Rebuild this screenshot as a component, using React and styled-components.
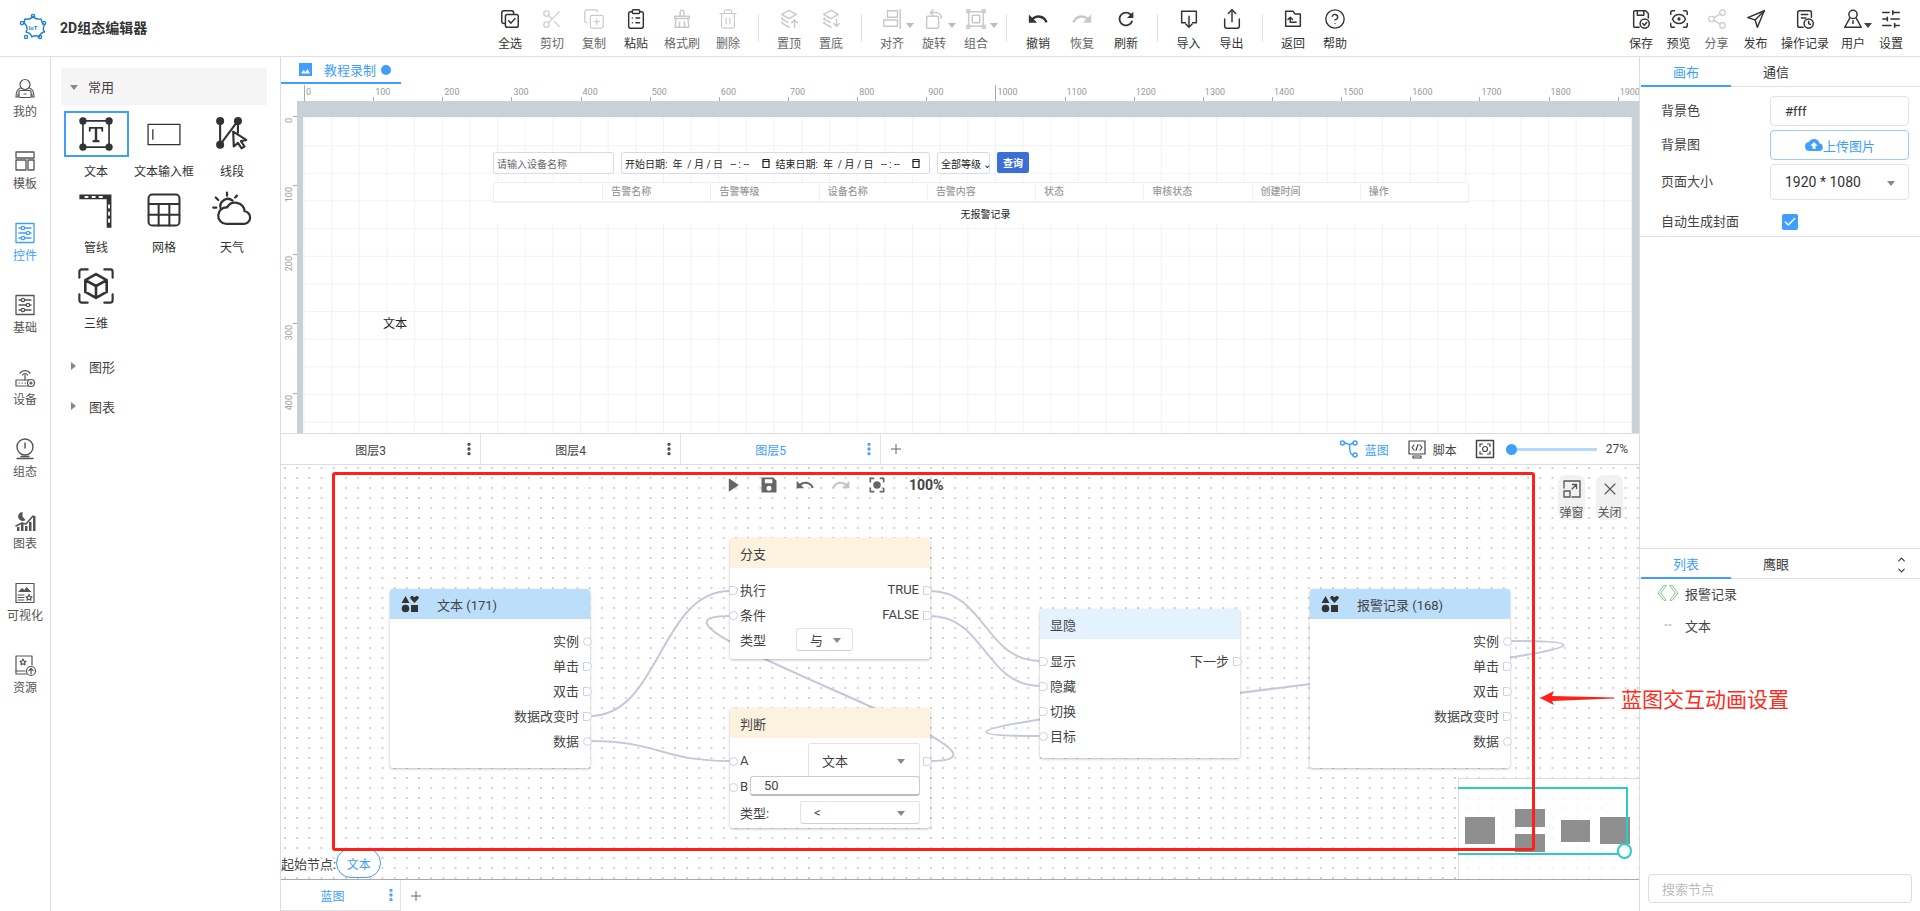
import React from 'react';
import styled, { createGlobalStyle } from 'styled-components';
import {
  Scissors, CopyPlus, ClipboardList, Trash2, CircleHelp, Share, Share2, ScanEye,
  SlidersHorizontal, EllipsisVertical, Plus, X, ChevronUp, ChevronDown,
} from 'lucide-react';

const BLUE = '#409eff';
const LINK = '#c3c8da';

const Global = createGlobalStyle`
  html, body { margin: 0; padding: 0; background: #fff; }
  body {
    font-family: Roboto, "Noto Sans CJK SC", sans-serif;
    font-size: 12px;
    color: #333;
    overflow: hidden;
  }
  * { box-sizing: border-box; }
`;

// page frame
const Page = styled.div`
  position: relative;
  width: 1920px;
  height: 911px;
  display: flex;
  flex-direction: column;
  overflow: hidden;
`;

const Header = styled.header`
  height: 57px;
  flex: none;
  display: flex;
  border-bottom: 1px solid #e0e0e0;
`;

const Brand = styled.div`
  width: 489px;
  flex: none;
  display: flex;
  align-items: center;
  padding-left: 19px;
  gap: 13px;
  font-size: 14px;
  font-weight: 700;
  color: #333;
  padding-bottom: 2px;
`;

const ToolGroup = styled.div`
  display: flex;
  align-items: flex-start;
  margin-left: ${p => (p.$right ? 'auto' : '0')};
  padding-right: ${p => (p.$right ? '9px' : '0')};
`;

const Tool = styled.div`
  position: relative;
  width: ${p => p.$w || 42}px;
  flex: none;
  padding-top: 7px;
  display: flex;
  flex-direction: column;
  align-items: center;
  color: ${p => (p.$off ? '#c9c9c9' : '#333')};
  &::after {
    content: ${p => (p.$caret ? '""' : 'none')};
    position: absolute;
    right: -1px;
    top: 23px;
    border: 4px solid transparent;
    border-top: 5px solid ${p => (p.$dark ? '#444' : '#bbb')};
    border-bottom: 0;
  }
`;

const ToolIcon = styled.div`
  height: 24px;
  display: flex;
  align-items: center;
  justify-content: center;
`;

const ToolLabel = styled.span`
  margin-top: 6px;
  line-height: 14px;
  white-space: nowrap;
  color: ${p => (p.$off ? '#666' : '#333')};
`;

const ToolSep = styled.div`
  width: 1px;
  height: 28px;
  margin: 14px 9px 0;
  flex: none;
  background: #e0e0e0;
`;

const Glyph = styled.svg.attrs(p => ({ viewBox: p.viewBox || '0 0 24 24' }))`
  width: ${p => p.$s || 22}px;
  height: ${p => p.$s || 22}px;
  flex: none;
  fill: none;
  stroke: currentColor;
  stroke-width: ${p => p.$sw || 1.6};
  stroke-linecap: round;
  stroke-linejoin: round;
  display: block;
`;

const Solid = styled.path`
  fill: currentColor;
  stroke: none;
`;

const Body = styled.div`
  flex: 1;
  min-height: 0;
  display: flex;
`;

// left rail
const Rail = styled.nav`
  width: 51px;
  flex: none;
  padding-top: 20px;
  border-right: 1px solid #ddd;
`;

const RailItem = styled.div`
  height: 72px;
  display: flex;
  flex-direction: column;
  align-items: center;
  color: ${p => (p.$active ? BLUE : '#555')};
  span { margin-top: 4px; line-height: 14px; white-space: nowrap; }
`;

const RailIcon = styled.div`
  height: 24px;
  display: flex;
  align-items: center;
`;

// components panel
const Palette = styled.aside`
  width: 230px;
  flex: none;
  padding: 11px 13px 0 10px;
  border-right: 1px solid #ddd;
`;

const GroupHead = styled.div`
  height: ${p => (p.$open ? 37 : 40)}px;
  display: flex;
  align-items: center;
  gap: 10px;
  padding-left: ${p => (p.$open ? 9 : 10)}px;
  font-size: 13px;
  background: ${p => (p.$open ? '#f5f5f5' : 'transparent')};
  color: #444;
`;

const Caret = styled.i`
  width: 0;
  height: 0;
  border-style: solid;
  ${p => (p.$down
    ? 'border-width: 5px 4px 0; border-color: #888 transparent transparent; margin-top:2px;'
    : 'border-width: 4px 0 4px 5px; border-color: transparent transparent transparent #888; margin-right:3px;')}
`;

const PaletteGrid = styled.div`
  display: grid;
  grid-template-columns: repeat(3, 68px);
  grid-auto-rows: 76px;
  margin: 6px 0 7px 1px;
`;

const Cell = styled.div`
  display: flex;
  flex-direction: column;
  align-items: center;
  color: #333;
  span { margin-top: 8px; line-height: 14px; white-space: nowrap; }
`;

const CellIcon = styled.div`
  width: 65px;
  height: 46px;
  display: flex;
  align-items: center;
  justify-content: center;
  border: 2px solid ${p => (p.$sel ? BLUE : 'transparent')};
`;

// center column
const Center = styled.main`
  flex: 1;
  min-width: 0;
  display: flex;
  flex-direction: column;
  border-right: 1px solid #ddd;
`;

const DocTabs = styled.div`
  height: 27px;
  flex: none;
  display: flex;
`;

const DocTab = styled.div`
  width: 120px;
  display: flex;
  align-items: center;
  padding-left: 18px;
  gap: 12px;
  font-size: 13px;
  color: ${BLUE};
  border-bottom: 2px solid ${BLUE};
`;

const DocDot = styled.i`
  width: 10px;
  height: 10px;
  border-radius: 50%;
  margin-left: -7px;
  background: ${BLUE};
`;

const TopRuler = styled.div`
  height: 17px;
  flex: none;
  display: flex;
  padding-left: 23px;
  overflow: hidden;
`;

const TopTick = styled.div`
  position: relative;
  width: 69.15px;
  flex: none;
  padding-left: 2px;
  font-size: 9px;
  line-height: 17px;
  color: #999;
  &::before {
    content: "";
    position: absolute;
    left: 0;
    bottom: 0;
    width: 1px;
    height: ${p => (p.$major ? 16 : 4)}px;
    background: #aaa;
  }
`;

const StageRow = styled.div`
  height: 333px;
  flex: none;
  display: flex;
  border-bottom: 1px solid #ddd;
  overflow: hidden;
`;

const LeftRuler = styled.div`
  width: 16px;
  flex: none;
  padding-top: 15px;
`;

const LeftTick = styled.div`
  position: relative;
  height: 69.15px;
  font-size: 9px;
  line-height: 14px;
  color: #999;
  padding-top: 2px;
  &::before {
    content: "";
    position: absolute;
    right: 0;
    top: 0;
    width: 4px;
    height: 1px;
    background: #aaa;
  }
  span {
    display: block;
    writing-mode: vertical-rl;
    transform: rotate(180deg);
    margin-left: 1px;
  }
`;

const StageWrap = styled.div`
  flex: 1;
  min-width: 0;
  padding: 16px 7px 0 6px;
  background: #c9d1d7;
`;

const Canvas = styled.div`
  position: relative;
  height: 100%;
  background-color: #fff;
  background-image:
    linear-gradient(to right, #f0f2f4 1px, transparent 1px),
    linear-gradient(to bottom, #f0f2f4 1px, transparent 1px);
  background-size: 27.66px 27.66px;
  background-position: 0.5px 0.5px;
`;

const FilterBar = styled.div`
  position: absolute;
  left: 190px;
  top: 35px;
  display: flex;
  align-items: flex-start;
  gap: 7px;
  font-size: 10px;
  color: #222;
`;

const FakeInput = styled.div`
  width: ${p => p.$w}px;
  height: 22px;
  flex: none;
  display: flex;
  align-items: center;
  padding: 0 3px;
  background: #fff;
  border: 1px solid #d5dbee;
  border-radius: 3px;
  color: ${p => (p.$ph ? '#666' : '#222')};
  white-space: pre;
`;

const DateGroup = styled.div`
  flex: 1;
  display: flex;
  align-items: center;
  padding-right: 5px;
  justify-content: space-between;
`;

const QueryBtn = styled.div`
  width: 32px;
  height: 21px;
  flex: none;
  display: flex;
  align-items: center;
  justify-content: center;
  background: #3b6fd6;
  color: #fff;
  font-weight: 700;
  border-radius: 2px;
`;

const AlarmTable = styled.div`
  position: absolute;
  left: 190px;
  top: 65px;
  width: 976px;
  height: 42px;
  background: #fff;
  font-size: 10px;
  border-radius: 4px 4px 0 0;
`;

const AlarmHead = styled.div`
  display: grid;
  grid-template-columns: repeat(9, 1fr);
  height: 21px;
  border: 1px solid #f0f0f3;
  border-radius: 4px 4px 0 0;
  border-bottom-width: 2px;
`;

const AlarmTh = styled.div`
  padding-left: 8px;
  line-height: 18px;
  color: #999;
  font-weight: 500;
  border-left: ${p => (p.$first ? '0' : '1px solid #f0f0f3')};
`;

const AlarmEmpty = styled.div`
  height: 21px;
  display: flex;
  align-items: center;
  justify-content: center;
  padding-left: 9px;
  color: #222;
`;

const CanvasText = styled.div`
  position: absolute;
  left: 80px;
  top: 198px;
  line-height: 18px;
  color: #222;
`;

// layer bar
const LayerBar = styled.div`
  height: 31px;
  flex: none;
  display: flex;
  align-items: center;
  border-bottom: 1px solid #ddd;
`;

const LayerTab = styled.div`
  position: relative;
  width: 200px;
  height: 100%;
  flex: none;
  display: flex;
  align-items: center;
  justify-content: center;
  padding-right: 20px;
  border-right: 1px solid #e4e4e4;
  color: ${p => (p.$active ? BLUE : '#444')};
  svg { position: absolute; right: 3px; top: 7px; }
`;

const AddBtn = styled.div`
  display: flex;
  margin-left: 7px;
  color: #666;
`;

const LayerTools = styled.div`
  margin-left: auto;
  display: flex;
  align-items: center;
  padding-right: 11px;
  color: #444;
  white-space: nowrap;
`;

const LayerTool = styled.div`
  display: flex;
  align-items: center;
  gap: 6px;
  margin-right: 18px;
  color: ${p => (p.$active ? BLUE : '#444')};
`;

const Slider = styled.div`
  position: relative;
  width: 86px;
  height: 3px;
  margin: 0 9px 0 -2px;
  background: #b3d8ff;
  &::before {
    content: "";
    position: absolute;
    left: -5px;
    top: -4px;
    width: 11px;
    height: 11px;
    border-radius: 50%;
    background: ${BLUE};
  }
`;

// blueprint
const Blueprint = styled.section`
  position: relative;
  height: 415px;
  flex: none;
  border-bottom: 1px solid #aaa;
  background-color: #fff;
  background-image: radial-gradient(circle at 1px 1px, #cfcfcf 0.7px, transparent 1px);
  background-size: 12.2px 10px;
  background-position: 3px 2px;
  font-size: 13px;
`;

const Links = styled.svg`
  position: absolute;
  left: 0;
  top: 0;
  overflow: visible;
  fill: none;
  stroke: ${LINK};
  stroke-width: 2;
`;

const FlowTools = styled.div`
  position: absolute;
  left: 442px;
  top: 10px;
  height: 20px;
  display: flex;
  align-items: center;
  gap: 16px;
  color: #666;
  z-index: 3;
`;

const Zoom = styled.span`
  margin-left: 6px;
  font-size: 14px;
  font-weight: 700;
  color: #444;
`;

const Node = styled.div`
  position: absolute;
  left: ${p => p.$x}px;
  top: ${p => p.$y}px;
  width: 200px;
  height: ${p => p.$h}px;
  background: #fff;
  border-radius: 3px;
  box-shadow: 0 1px 3px rgba(0, 0, 0, 0.28);
  z-index: 2;
`;

const NodeHead = styled.div`
  height: 30px;
  display: flex;
  align-items: center;
  padding-left: 10px;
  gap: ${p => (p.$icon ? 17 : 0)}px;
  background: ${p => p.$bg};
  border-radius: 3px 3px 0 0;
  color: #444;
`;

const NodeBody = styled.div`
  padding-top: ${p => (p.$tight ? 0 : 9)}px;
`;

const Row = styled.div`
  position: relative;
  height: ${p => p.$h || 25}px;
  margin-top: ${p => p.$mt || 0}px;
  display: flex;
  align-items: center;
  justify-content: ${p => (p.$out ? 'flex-end' : 'space-between')};
  padding: 0 ${p => p.$pr ?? 11}px 0 10px;
  color: #444;
  white-space: nowrap;
`;

const Port = styled.i`
  position: absolute;
  top: 50%;
  width: 9px;
  height: 9px;
  margin-top: -3.5px;
  background: #fff;
  border: 1.5px solid #ccd1e2;
  border-radius: ${p => (p.$exec ? '0 50% 50% 0' : '50%')};
  ${p => (p.$out ? 'right: -2px;' : 'left: -1px;')}
`;

const PickBox = styled.div`
  width: ${p => p.$w}px;
  height: ${p => p.$h}px;
  flex: none;
  display: flex;
  align-items: center;
  justify-content: space-between;
  padding: 0 ${p => p.$pr || 13}px 0 ${p => p.$pl || 13}px;
  background: #fff;
  border: 1px solid #e3e3e3;
  border-bottom-color: #d0d0d0;
  border-radius: 3px;
  position: relative;
  z-index: ${p => p.$z || 0};
`;

const NumBox = styled(PickBox)`
  border: 1px solid #ccc;
  border-bottom: 2px solid #bbb;
  justify-content: flex-start;
`;

const PopBtns = styled.div`
  position: absolute;
  right: 16px;
  top: 10px;
  display: flex;
  gap: 11px;
  z-index: 3;
`;

const PopBtn = styled.div`
  width: 27px;
  height: 45px;
  display: flex;
  flex-direction: column;
  align-items: center;
  padding-top: 4px;
  background: #f1f1f1;
  border-radius: 8px;
  color: #555;
  font-size: 12px;
  span { margin-top: 7px; line-height: 14px; white-space: nowrap; }
`;

const StartRow = styled.div`
  position: absolute;
  left: 0;
  top: 383px;
  height: 30px;
  display: flex;
  align-items: center;
  color: #444;
  z-index: 3;
`;

const StartPill = styled.div`
  width: 45px;
  height: 30px;
  display: flex;
  align-items: center;
  justify-content: center;
  background: #fff;
  border: 1px solid ${BLUE};
  border-radius: 15px;
  color: ${BLUE};
  font-size: 12px;
`;

const RedFrame = styled.div`
  position: absolute;
  left: 51px;
  top: 7px;
  width: 1203px;
  height: 379px;
  border: 3px solid #ff2119;
  border-radius: 3px;
  z-index: 5;
  pointer-events: none;
`;

const Minimap = styled.div`
  position: absolute;
  right: 0;
  bottom: 0;
  width: 181px;
  height: 101px;
  background: rgba(255, 255, 255, 0.7);
  border-left: 1px solid #ddd;
  border-top: 1px solid #ddd;
  z-index: 4;
`;

const MiniBlock = styled.i`
  position: absolute;
  left: ${p => p.$x}px;
  top: ${p => p.$y}px;
  width: ${p => p.$w}px;
  height: ${p => p.$h}px;
  background: #8f8f8f;
`;

const MiniView = styled.div`
  position: absolute;
  left: -1px;
  top: 8px;
  width: 170px;
  height: 68px;
  border: 2px solid #2dcbc0;
  border-left: 0;
  &::after {
    content: "";
    position: absolute;
    right: -6px;
    bottom: -6px;
    width: 11px;
    height: 12px;
    border-radius: 50%;
    background: #fff;
    border: 2px solid #2dcbc0;
  }
`;

const BottomTabs = styled.div`
  flex: 1;
  display: flex;
  align-items: center;
`;

const BottomTab = styled(LayerTab)`
  width: 120px;
  padding-right: 16px;
  color: ${BLUE};
  border-bottom: 1px solid #e4e4e4;
  svg { top: 7px; right: 1px; }
`;

// right panel
const Side = styled.aside`
  width: 280px;
  flex: none;
  display: flex;
  flex-direction: column;
  font-size: 13px;
`;

const SideTabs = styled.div`
  height: ${p => (p.$top ? 31 : 30)}px;
  flex: none;
  display: flex;
  align-items: stretch;
  padding-left: 1px;
  border-top: ${p => (p.$top ? '1px solid #e0e0e0' : '0')};
  border-bottom: 1px solid #e0e0e0;
  position: relative;
`;

const SideTab = styled.div`
  width: 90px;
  display: flex;
  align-items: center;
  justify-content: center;
  margin-bottom: -1px;
  color: ${p => (p.$active ? BLUE : '#333')};
  border-bottom: 2px solid ${p => (p.$active ? BLUE : 'transparent')};
`;

const Form = styled.div`
  height: 150px;
  flex: none;
  padding: 9px 11px 0 21px;
  border-bottom: 1px solid #e0e0e0;
  display: flex;
  flex-direction: column;
  gap: 4px;
`;

const FormRow = styled.div`
  display: flex;
  align-items: center;
  justify-content: space-between;
  color: #444;
`;

const FormLabel = styled.span`
  margin-bottom: 3px;
`;

const FieldBox = styled.div`
  width: 139px;
  height: ${p => p.$h || 30}px;
  display: flex;
  align-items: center;
  justify-content: ${p => (p.$center ? 'center' : 'space-between')};
  padding: 0 13px 0 14px;
  border: 1px solid ${p => (p.$blue ? '#9ccbfb' : '#e2e2e2')};
  border-radius: 4px;
  color: ${p => (p.$blue ? BLUE : '#333')};
  font-size: ${p => p.$fs || 13}px;
`;

const Check = styled.div`
  width: 16px;
  height: 16px;
  margin-right: 111px;
  display: flex;
  align-items: center;
  justify-content: center;
  background: ${BLUE};
  border-radius: 2px;
  color: #fff;
`;

const CheckRow = styled(FormRow)`
  margin-top: 7px;
`;

const Spacer = styled.div`
  height: 311px;
  flex: none;
`;

const FoldIcon = styled.div`
  position: absolute;
  right: 13px;
  top: 5px;
  display: flex;
  flex-direction: column;
  color: #333;
`;

const Tree = styled.div`
  flex: 1;
  padding-top: 2px;
  display: flex;
  flex-direction: column;
`;

const TreeRow = styled.div`
  height: ${p => p.$h}px;
  display: flex;
  align-items: center;
  padding-left: 18px;
  color: #444;
  gap: 7px;
`;

const TreeMark = styled.div`
  width: 20px;
  display: flex;
  justify-content: center;
  color: ${p => p.$c || '#999'};
`;

const SearchBox = styled.div`
  height: 29px;
  margin: 0 8px 8px;
  display: flex;
  align-items: center;
  padding-left: 13px;
  border: 1px solid #ddd;
  border-radius: 4px;
  color: #bbb;
`;

// annotation on top of everything
const NoteArrow = styled.svg`
  position: absolute;
  left: 1540px;
  top: 690px;
  z-index: 6;
`;

const NoteText = styled.div`
  position: absolute;
  left: 1621px;
  top: 684px;
  font-size: 21px;
  line-height: 32px;
  color: #ff2a1a;
  white-space: nowrap;
  z-index: 6;
`;

const RedoTint = styled.span`
  display: flex;
  color: #c4c4c4;
`;

const LogoMark = styled.text`
  font-size: 6px;
  font-weight: 700;
  fill: #1f7fd4;
  stroke: none;
  text-anchor: middle;
`;

// drawings
const Logo = () => (
  <Glyph $s={28} $sw={1.4} viewBox="0 0 28 28" style={{ color: '#1f7fd4' }}>
    <path d="M14 3.5c2 2.500 4 3 8 2.500.5 3 1.500 4.500 3.500 6-1.500 2.500-1.500 5 0 7-3 .5-4.500 2-5.500 5-2.500-1.500-5-1.500-7 0-1-3-3-4.500-6-5 1.500-2.500 1.500-5-.5-7.500C4 10 5.500 8.500 6 6c3 .5 6 0 8-2.500z" />
    <circle cx="14" cy="3" r="1.600" />
    <circle cx="25" cy="10" r="1.600" />
    <circle cx="21" cy="24" r="1.600" />
    <circle cx="7" cy="24" r="1.600" />
    <circle cx="3" cy="10" r="1.600" />
    <LogoMark x="14" y="16.500">IoT</LogoMark>
  </Glyph>
);

const SelectAllIcon = () => (
  <Glyph>
    <rect x="3" y="3" width="13" height="14" rx="2.500" />
    <rect x="7" y="7" width="14" height="14" rx="2" fill="#fff" />
    <path d="M10.500 14l2.500 2.500 4.500-5" />
  </Glyph>
);
const BrushIcon = () => (
  <Glyph>
    <path d="M10 9V4.500a2 2 0 0 1 4 0V9" />
    <path d="M4 9h16v2.500H4z" />
    <path d="M5.500 11.500L4.500 21h15l-1-9.500" />
    <path d="M9.500 15l-.5 6M14.500 15l.5 6" />
  </Glyph>
);
const LayerUpIcon = () => (
  <Glyph>
    <path d="M12 2.500l8 4.500-8 4.500L4 7z" />
    <path d="M5 11l-1 .8 7 4M5 15.500l-1 .8 8 4.700" />
    <path d="M18 21v-8M15 16l3-3 3 3" />
  </Glyph>
);
const LayerDownIcon = () => (
  <Glyph>
    <path d="M12 2.500l8 4.500-8 4.500L4 7z" />
    <path d="M5 11l-1 .8 7 4M5 15.500l-1 .8 8 4.700" />
    <path d="M18 12v8M15 17l3 3 3-3" />
  </Glyph>
);
const AlignIcon = () => (
  <Glyph>
    <rect x="7" y="3" width="11" height="7" />
    <rect x="3" y="13" width="15" height="7" />
    <path d="M21 2v20" />
  </Glyph>
);
const RotateIcon = () => (
  <Glyph>
    <rect x="4" y="9" width="13" height="13" rx="1" />
    <path d="M8 5h6c3 0 6 2 6 6M11 2L8 5l3 3" />
  </Glyph>
);
const GroupIcon = () => (
  <Glyph>
    <rect x="4" y="4" width="16" height="16" />
    <rect x="8" y="8" width="8" height="8" />
    <path d="M2 2h3v3H2zM19 2h3v3h-3zM2 19h3v3H2zM19 19h3v3h-3z" />
  </Glyph>
);
const UndoIcon = ({ s = 22 }) => (
  <Glyph $s={s}><Solid d="M12.500 8c-2.650 0-5.050.99-6.900 2.600L2 7v9h9l-3.620-3.620c1.390-1.160 3.160-1.880 5.120-1.880 3.540 0 6.550 2.310 7.600 5.500l2.370-.78C21.080 11.030 17.150 8 12.500 8z" /></Glyph>
);
const RedoIcon = ({ s = 22 }) => (
  <Glyph $s={s}><Solid d="M18.400 10.600C16.550 8.990 14.150 8 11.500 8c-4.650 0-8.580 3.030-9.960 7.220L3.900 16c1.050-3.190 4.050-5.500 7.600-5.500 1.950 0 3.730.72 5.120 1.880L13 16h9V7l-3.600 3.600z" /></Glyph>
);
const RefreshIcon = () => (
  <Glyph><Solid d="M17.650 6.350C16.200 4.900 14.210 4 12 4c-4.420 0-7.990 3.580-7.990 8s3.570 8 7.990 8c3.730 0 6.840-2.550 7.730-6h-2.080c-.82 2.330-3.040 4-5.650 4-3.310 0-6-2.690-6-6s2.690-6 6-6c1.660 0 3.140.69 4.220 1.780L13 11h7V4l-2.350 2.350z" /></Glyph>
);
const ImportIcon = () => (
  <Glyph>
    <path d="M8 16H4V3.500h16V16h-4" />
    <path d="M12 9v12M8.500 17.500L12 21l3.500-3.500" />
  </Glyph>
);
const BackIcon = () => (
  <Glyph>
    <path d="M4 3.500h8l2 3h6V20H4z" />
    <path d="M15.500 15.500H9M9 15.500v-5M6.500 12.500L9 10l2.500 2.500" />
  </Glyph>
);
const SaveIcon = () => (
  <Glyph>
    <path d="M10 21H5a1 1 0 0 1-1-1V4a1 1 0 0 1 1-1h12l3 3v5" />
    <path d="M8 3v5h7V3" />
    <circle cx="16" cy="17" r="5" />
    <path d="M13.800 17l1.700 1.700 2.700-3" />
  </Glyph>
);
const SendIcon = () => (
  <Glyph>
    <path d="M21 3L3 10.500l8 2.500 2.500 8z" />
    <path d="M21 3L11 13" />
  </Glyph>
);
const RecordIcon = () => (
  <Glyph>
    <path d="M10 21H6a2 2 0 0 1-2-2V5a2 2 0 0 1 2-2h11a2 2 0 0 1 2 2v5" />
    <path d="M8 7h7M8 11h5" />
    <circle cx="16" cy="17" r="5" />
    <path d="M16 14.500V17l2 1" />
  </Glyph>
);
const UserIcon = () => (
  <Glyph>
    <circle cx="12" cy="7" r="4.500" />
    <path d="M8.500 11L3 21h18l-5.500-10" />
    <path d="M12 14v3" />
  </Glyph>
);

const MineIcon = () => (
  <Glyph $s={24} $sw={1.200}>
    <circle cx="12" cy="7.500" r="5" />
    <path d="M7.500 11c-3 1-4.500 4-4.500 9h2v-3M16.500 11c3 1 4.500 4 4.500 9h-2v-3" />
    <rect x="6" y="13.500" width="12" height="7" rx="1" />
    <path d="M11 17h2" />
  </Glyph>
);
const TemplateIcon = () => (
  <Glyph $s={24} $sw={1.300}>
    <rect x="3" y="3" width="18" height="6" />
    <rect x="3" y="11" width="10" height="10" />
    <rect x="15" y="11" width="6" height="10" />
  </Glyph>
);
const SlidersBoxIcon = () => (
  <Glyph $s={24} $sw={1.300}>
    <rect x="3" y="2.500" width="18" height="19" />
    <path d="M6 7h12M6 12h12M6 17h12" />
    <circle cx="10" cy="7" r="1.700" fill="#fff" />
    <circle cx="15" cy="12" r="1.700" fill="#fff" />
    <circle cx="10" cy="17" r="1.700" fill="#fff" />
  </Glyph>
);
const DeviceIcon = () => (
  <Glyph $s={24} $sw={1.200}>
    <path d="M7 8a6.500 6.500 0 0 1 10 0M9.500 10a3 3 0 0 1 5 0" />
    <path d="M12 10v5" />
    <rect x="3" y="15" width="13" height="6" />
    <circle cx="18" cy="18" r="3.500" fill="#fff" />
    <circle cx="18" cy="18" r="1" />
    <path d="M6 18h.5M9 18h.5M12 18h.5" />
  </Glyph>
);
const GaugeIcon = () => (
  <Glyph $s={24} $sw={1.400}>
    <circle cx="12" cy="10" r="8" />
    <path d="M12 6v5" />
    <path d="M4 21.500h16M8 19.500h8" />
  </Glyph>
);
const ChartIcon = () => (
  <Glyph $s={24}>
    <Solid d="M9.500 3a4.500 4.500 0 1 0 3 7.900L9.500 7.500z" />
    <Solid d="M8 15h2.500v7H8zM12 17h2.500v5H12zM16 13h2.500v9H16zM20 7h2.500v15H20zM4 18h2.500v4H4z" />
    <path d="M3 17l6-3 4 1 7-8" />
  </Glyph>
);
const VisualIcon = () => (
  <Glyph $s={24} $sw={1.200}>
    <rect x="3" y="2.500" width="18" height="19" />
    <Solid d="M5 11l4-4 2.500 2 2-3 5 5z" />
    <path d="M5 14h6M5 16.500h6M5 19h6" />
    <path d="M16 13.500l1 2 2 .3-1.500 1.400.4 2-1.900-1-1.900 1 .4-2L13 15.800l2-.3z" />
  </Glyph>
);
const ResourceIcon = () => (
  <Glyph $s={24} $sw={1.200}>
    <path d="M14 21H3V3h16v9" />
    <path d="M3 18h9" />
    <path d="M10 6l1 2 2 .3-1.500 1.400.4 2-1.900-1-1.900 1 .4-2L7 8.300l2-.3z" />
    <circle cx="18" cy="18" r="4.500" fill="#fff" />
    <path d="M18 21v-5M16 17.500l2-2 2 2" />
  </Glyph>
);

const TextBoxIcon = () => (
  <Glyph $s={38} $sw={1.400} viewBox="0 0 32 32">
    <rect x="5" y="5" width="22" height="22" />
    <circle cx="5" cy="5" r="2.400" fill="currentColor" />
    <circle cx="27" cy="5" r="2.400" fill="currentColor" />
    <circle cx="5" cy="27" r="2.400" fill="currentColor" />
    <circle cx="27" cy="27" r="2.400" fill="currentColor" />
    <Solid d="M10 10h12v4h-1.200l-.6-2.400H17v9.200l2 .6V23h-6v-1.600l2-.6v-9.200h-3.200l-.6 2.400H10z" />
  </Glyph>
);
const InputBoxIcon = () => (
  <Glyph $s={34} $sw={1.200} viewBox="0 0 32 32">
    <rect x="1" y="7" width="30" height="19" />
    <path d="M5.500 12v9" />
  </Glyph>
);
const LineIcon = () => (
  <Glyph $s={38} $sw={1.800} viewBox="0 0 32 32">
    <path d="M6 5v20L21 5v10" />
    <circle cx="6" cy="5" r="2.500" fill="currentColor" />
    <circle cx="6" cy="25" r="2.500" fill="currentColor" />
    <circle cx="21" cy="5" r="2.500" fill="currentColor" />
    <path d="M17 14l11 7-4.500 1 3 4.500-2.500 1.500-3-4.500-3.500 3z" fill="#fff" />
  </Glyph>
);
const PipeIcon = () => (
  <Glyph $s={38} viewBox="0 0 32 32">
    <Solid d="M2 3h27v4H2zM25 7h4v24h-4z" />
    <path d="M7 5h2M13 5h2M19 5h2M27 12v2M27 18v2M27 24v2" style={{ stroke: '#fff' }} />
  </Glyph>
);
const TableIcon = () => (
  <Glyph $s={38} $sw={1.700} viewBox="0 0 32 32">
    <rect x="3" y="3" width="26" height="26" rx="3" />
    <path d="M3 11h26M3 20h26M11.500 11v18M20.500 11v18" />
  </Glyph>
);
const WeatherIcon = () => (
  <Glyph $s={40} $sw={1.800} viewBox="0 0 32 32">
    <path d="M11 27h14a5 5 0 0 0 1-10 7.500 7.500 0 0 0-14-3 6.500 6.500 0 0 0-1 13z" />
    <path d="M7 15a6 6 0 0 1 9.500-6.500" />
    <path d="M12 2v2.500M3 6l2 2M1 14h2.500M20 4.500L18.500 6" />
  </Glyph>
);
const CubeIcon = () => (
  <Glyph $s={38} $sw={1.800} viewBox="0 0 32 32">
    <path d="M2 9V4a2 2 0 0 1 2-2h5M23 2h5a2 2 0 0 1 2 2v5M30 23v5a2 2 0 0 1-2 2h-5M9 30H4a2 2 0 0 1-2-2v-5" />
    <path d="M16 6l9 5v10l-9 5-9-5V11zM7 11l9 5 9-5M16 16v10" strokeWidth="2.200" />
  </Glyph>
);

const PictureTabIcon = () => (
  <Glyph $s={13} viewBox="0 0 13 13">
    <Solid d="M0 0h13v13H0z" />
    <path d="M2 10.500l2.500-3.500 2 2 2-3 2.500 4.500z" fill="#fff" stroke="none" />
  </Glyph>
);

const ShapesIcon = () => (
  <Glyph $s={20} viewBox="0 0 20 20" style={{ color: '#333' }}>
    <Solid d="M5.500 2l4 7h-8zM14.500 9l-4-4.200c-1.200-1.800 1-3.800 2.600-2.500l1.400 1 1.400-1c1.600-1.300 3.800.7 2.600 2.500z" />
    <circle cx="5.500" cy="14.500" r="3.800" fill="currentColor" stroke="none" />
    <Solid d="M11 11h7v7h-7z" />
  </Glyph>
);

const BlueprintIcon = () => (
  <Glyph $s={20} viewBox="0 0 20 20" $sw={1.500}>
    <circle cx="3.500" cy="4" r="2" />
    <circle cx="16" cy="4" r="2" />
    <circle cx="16" cy="16" r="2" />
    <path d="M5.500 4c3 0 3 1.500 5 1.500S13 4 14 4M10.500 5.500c0 5 1 10.500 3.500 10.500" />
  </Glyph>
);
const ScriptIcon = () => (
  <Glyph $s={20} viewBox="0 0 20 20" $sw={1.200}>
    <rect x="2" y="2" width="16" height="13" />
    <path d="M6 19h8v-2H6zM7 6L5 8.500 7 11M13 6l2 2.500L13 11M11 5.500L9 11.500" />
  </Glyph>
);
const FitIcon = () => (
  <Glyph $s={20} viewBox="0 0 20 20" $sw={1.200}>
    <rect x="1.500" y="1.500" width="17" height="17" strokeWidth="1.500" />
    <path d="M5 7.500V5h2.500M12.500 5H15v2.500M15 12.500V15h-2.500M7.500 15H5v-2.500" />
    <circle cx="10" cy="10" r="2.500" />
  </Glyph>
);
const FlowFitIcon = () => (
  <Glyph $s={20} $sw={2}>
    <path d="M4 8V4h4M16 4h4v4M20 16v4h-4M8 20H4v-4" />
    <circle cx="12" cy="12" r="3.500" fill="currentColor" />
  </Glyph>
);
const PopoutIcon = () => (
  <Glyph $s={20} viewBox="0 0 20 20" $sw={1.300}>
    <path d="M2 9V2h16v16h-8" />
    <rect x="2" y="12" width="6" height="6" />
    <path d="M10 10l4.500-4.500M10.500 5.500h4v4" />
  </Glyph>
);

const CalIcon = () => (
  <Glyph $s={10} viewBox="0 0 10 10" $sw={1.200}>
    <rect x="2" y="1.500" width="6" height="8" />
    <path d="M2 3.500h6" />
  </Glyph>
);

const TopTicks = Array.from({ length: 20 }, (_, i) => i * 100);
const SideTicks = [0, 100, 200, 300, 400];
const Columns = ['', '告警名称', '告警等级', '设备名称', '告警内容', '状态', '审核状态', '创建时间', '操作'];

const PaletteItems = [
  { name: '文本', icon: <TextBoxIcon />, sel: true },
  { name: '文本输入框', icon: <InputBoxIcon /> },
  { name: '线段', icon: <LineIcon /> },
  { name: '管线', icon: <PipeIcon /> },
  { name: '网格', icon: <TableIcon /> },
  { name: '天气', icon: <WeatherIcon /> },
  { name: '三维', icon: <CubeIcon /> },
];

const RailItems = [
  { name: '我的', icon: <MineIcon /> },
  { name: '模板', icon: <TemplateIcon /> },
  { name: '控件', icon: <SlidersBoxIcon />, active: true },
  { name: '基础', icon: <SlidersBoxIcon /> },
  { name: '设备', icon: <DeviceIcon /> },
  { name: '组态', icon: <GaugeIcon /> },
  { name: '图表', icon: <ChartIcon /> },
  { name: '可视化', icon: <VisualIcon /> },
  { name: '资源', icon: <ResourceIcon /> },
];

const ToolButton = ({ label, icon, off, w, caret, dark }) => (
  <Tool $off={off} $w={w} $caret={caret} $dark={dark}>
    <ToolIcon>{icon}</ToolIcon>
    <ToolLabel $off={off}>{label}</ToolLabel>
  </Tool>
);

const PortRow = ({ label, out, exec }) => (
  <Row $out={out}>
    {label}
    <Port $out={out} $exec={exec} />
  </Row>
);

const DateRange = ({ label }) => (
  <DateGroup>
    <span>{label}  年  / 月 / 日   -- : --</span>
    <CalIcon />
  </DateGroup>
);

export default function App() {
  return (
    <Page>
      <Global />
      <Header>
        <Brand><Logo />2D组态编辑器</Brand>
        <ToolGroup>
          <ToolButton label="全选" icon={<SelectAllIcon />} />
          <ToolButton label="剪切" off icon={<Scissors size={22} strokeWidth={1.3} />} />
          <ToolButton label="复制" off icon={<CopyPlus size={22} strokeWidth={1.3} />} />
          <ToolButton label="粘贴" icon={<ClipboardList size={22} strokeWidth={1.6} />} />
          <ToolButton label="格式刷" off w={50} icon={<BrushIcon />} />
          <ToolButton label="删除" off icon={<Trash2 size={22} strokeWidth={1.3} />} />
          <ToolSep />
          <ToolButton label="置顶" off icon={<LayerUpIcon />} />
          <ToolButton label="置底" off icon={<LayerDownIcon />} />
          <ToolSep />
          <ToolButton label="对齐" off caret icon={<AlignIcon />} />
          <ToolButton label="旋转" off caret icon={<RotateIcon />} />
          <ToolButton label="组合" off caret icon={<GroupIcon />} />
          <ToolSep />
          <ToolButton label="撤销" w={44} icon={<UndoIcon />} />
          <ToolButton label="恢复" w={44} off icon={<RedoIcon />} />
          <ToolButton label="刷新" w={44} icon={<RefreshIcon />} />
          <ToolSep />
          <ToolButton label="导入" w={43} icon={<ImportIcon />} />
          <ToolButton label="导出" w={43} icon={<Share size={22} strokeWidth={1.6} />} />
          <ToolSep />
          <ToolButton label="返回" icon={<BackIcon />} />
          <ToolButton label="帮助" icon={<CircleHelp size={22} strokeWidth={1.5} />} />
        </ToolGroup>
        <ToolGroup $right>
          <ToolButton label="保存" w={38} icon={<SaveIcon />} />
          <ToolButton label="预览" w={37} icon={<ScanEye size={22} strokeWidth={1.6} />} />
          <ToolButton label="分享" w={39} off icon={<Share2 size={22} strokeWidth={1.3} />} />
          <ToolButton label="发布" w={39} icon={<SendIcon />} />
          <ToolButton label="操作记录" w={60} icon={<RecordIcon />} />
          <ToolButton label="用户" w={36} caret dark icon={<UserIcon />} />
          <ToolButton label="设置" w={40} icon={<SlidersHorizontal size={22} strokeWidth={1.7} />} />
        </ToolGroup>
      </Header>

      <Body>
        <Rail>
          {RailItems.map(item => (
            <RailItem key={item.name} $active={item.active}>
              <RailIcon>{item.icon}</RailIcon>
              <span>{item.name}</span>
            </RailItem>
          ))}
        </Rail>

        <Palette>
          <GroupHead $open><Caret $down />常用</GroupHead>
          <PaletteGrid>
            {PaletteItems.map(item => (
              <Cell key={item.name}>
                <CellIcon $sel={item.sel}>{item.icon}</CellIcon>
                <span>{item.name}</span>
              </Cell>
            ))}
          </PaletteGrid>
          <GroupHead><Caret />图形</GroupHead>
          <GroupHead><Caret />图表</GroupHead>
        </Palette>

        <Center>
          <DocTabs>
            <DocTab><PictureTabIcon />教程录制<DocDot /></DocTab>
          </DocTabs>
          <TopRuler>
            {TopTicks.map(n => (
              <TopTick key={n} $major={n % 1000 === 0}>{n}</TopTick>
            ))}
          </TopRuler>
          <StageRow>
            <LeftRuler>
              {SideTicks.map(n => (
                <LeftTick key={n}><span>{n}</span></LeftTick>
              ))}
            </LeftRuler>
            <StageWrap>
              <Canvas>
                <FilterBar>
                  <FakeInput $w={121} $ph>请输入设备名称</FakeInput>
                  <FakeInput $w={309}>
                    <DateRange label="开始日期:" />
                    <DateRange label="结束日期:" />
                  </FakeInput>
                  <FakeInput $w={53}>全部等级 ⌄</FakeInput>
                  <QueryBtn>查询</QueryBtn>
                </FilterBar>
                <AlarmTable>
                  <AlarmHead>
                    {Columns.map((c, i) => (
                      <AlarmTh key={i} $first={i === 0}>{c}</AlarmTh>
                    ))}
                  </AlarmHead>
                  <AlarmEmpty>无报警记录</AlarmEmpty>
                </AlarmTable>
                <CanvasText>文本</CanvasText>
              </Canvas>
            </StageWrap>
          </StageRow>

          <LayerBar>
            <LayerTab>图层3<EllipsisVertical size={16} strokeWidth={3} color="#444" /></LayerTab>
            <LayerTab>图层4<EllipsisVertical size={16} strokeWidth={3} color="#444" /></LayerTab>
            <LayerTab $active>图层5<EllipsisVertical size={16} strokeWidth={3} /></LayerTab>
            <AddBtn><Plus size={16} strokeWidth={1.5} /></AddBtn>
            <LayerTools>
              <LayerTool $active><BlueprintIcon />蓝图</LayerTool>
              <LayerTool><ScriptIcon />脚本</LayerTool>
              <LayerTool><FitIcon /></LayerTool>
              <Slider />
              27%
            </LayerTools>
          </LayerBar>

          <Blueprint>
            <Links width="1358" height="414" viewBox="281 465 1358 414">
              <path d="M590 716C660 716 660 591 730 591" />
              <path d="M590 741C660 741 660 761 730 761" />
              <path d="M930 591C985 591 985 661 1040 661" />
              <path d="M930 616C985 616 985 686 1040 686" />
              <path d="M930 761C1060 761 600 616 730 616" />
              <path d="M1510 641C1810 641 740 736 1040 736" />
            </Links>

            <FlowTools>
              <Glyph $s={20}><Solid d="M7 4l12 8-12 8z" /></Glyph>
              <Glyph $s={20}><Solid d="M3 3h14l4 4v14H3zM7 5v5h9V5zM12 13a3 3 0 1 0 0 6 3 3 0 0 0 0-6z" /></Glyph>
              <UndoIcon s={20} />
              <RedoTint><RedoIcon s={20} /></RedoTint>
              <FlowFitIcon />
              <Zoom>100%</Zoom>
            </FlowTools>

            <Node $x={109} $y={124} $h={179}>
              <NodeHead $bg="#bbdefb" $icon><ShapesIcon />文本 (171)</NodeHead>
              <NodeBody>
                <PortRow out label="实例" />
                <PortRow out exec label="单击" />
                <PortRow out exec label="双击" />
                <PortRow out exec label="数据改变时" />
                <PortRow out label="数据" />
              </NodeBody>
            </Node>

            <Node $x={449} $y={73} $h={121}>
              <NodeHead $bg="#fdf1df">分支</NodeHead>
              <NodeBody>
                <Row>
                  <span>执行</span><Port $exec />
                  <span>TRUE</span><Port $out $exec />
                </Row>
                <Row>
                  <span>条件</span><Port />
                  <span>FALSE</span><Port $out $exec />
                </Row>
                <Row $h={24} $pr={77}>
                  <span>类型</span>
                  <PickBox $w={57} $h={23} $pl={13} $pr={11}>
                    与<Caret $down />
                  </PickBox>
                </Row>
              </NodeBody>
            </Node>

            <Node $x={449} $y={243} $h={120}>
              <NodeHead $bg="#fdf1df">判断</NodeHead>
              <NodeBody $tight>
                <Row $h={35} $mt={5} $pr={10}>
                  <span>A</span><Port />
                  <PickBox $w={112} $h={35} $pr={14}>文本<Caret $down /></PickBox>
                  <Port $out $exec />
                </Row>
                <Row $h={20} $mt={-2} $pr={10}>
                  <span>B</span><Port />
                  <NumBox $w={170} $h={20} $z={1}>50</NumBox>
                </Row>
                <Row $h={23} $mt={5} $pr={10}>
                  <span>类型:</span>
                  <PickBox $w={120} $h={23} $pr={14}>&lt;<Caret $down /></PickBox>
                </Row>
              </NodeBody>
            </Node>

            <Node $x={759} $y={144} $h={149}>
              <NodeHead $bg="#e3f2fd">显隐</NodeHead>
              <NodeBody>
                <Row>
                  <span>显示</span><Port $exec />
                  <span>下一步</span><Port $out $exec />
                </Row>
                <PortRow exec label="隐藏" />
                <PortRow exec label="切换" />
                <PortRow label="目标" />
              </NodeBody>
            </Node>

            <Node $x={1029} $y={124} $h={179}>
              <NodeHead $bg="#bbdefb" $icon><ShapesIcon />报警记录 (168)</NodeHead>
              <NodeBody>
                <PortRow out label="实例" />
                <PortRow out exec label="单击" />
                <PortRow out exec label="双击" />
                <PortRow out exec label="数据改变时" />
                <PortRow out label="数据" />
              </NodeBody>
            </Node>

            <PopBtns>
              <PopBtn><PopoutIcon /><span>弹窗</span></PopBtn>
              <PopBtn><X size={20} strokeWidth={1.3} /><span>关闭</span></PopBtn>
            </PopBtns>

            <StartRow>起始节点:<StartPill>文本</StartPill></StartRow>

            <Minimap>
              <MiniBlock $x={6} $y={38} $w={30} $h={27} />
              <MiniBlock $x={56} $y={30} $w={30} $h={18} />
              <MiniBlock $x={56} $y={55} $w={30} $h={18} />
              <MiniBlock $x={102} $y={41} $w={29} $h={22} />
              <MiniBlock $x={141} $y={38} $w={30} $h={27} />
              <MiniView />
            </Minimap>

            <RedFrame />
          </Blueprint>

          <BottomTabs>
            <BottomTab>蓝图<EllipsisVertical size={16} strokeWidth={3} /></BottomTab>
            <AddBtn><Plus size={16} strokeWidth={1.5} /></AddBtn>
          </BottomTabs>
        </Center>

        <Side>
          <SideTabs>
            <SideTab $active>画布</SideTab>
            <SideTab>通信</SideTab>
          </SideTabs>
          <Form>
            <FormRow><FormLabel>背景色</FormLabel><FieldBox>#fff</FieldBox></FormRow>
            <FormRow>
              <FormLabel>背景图</FormLabel>
              <FieldBox $blue $center>
                <Glyph $s={18}>
                  <Solid d="M19.350 10.040A7.490 7.490 0 0 0 12 4a7.500 7.500 0 0 0-6.650 4.040A6 6 0 0 0 6 20h13a5 5 0 0 0 .35-9.960zM14 13v4h-4v-4H7l5-5 5 5z" />
                </Glyph>
                上传图片
              </FieldBox>
            </FormRow>
            <FormRow>
              <FormLabel>页面大小</FormLabel>
              <FieldBox $h={36} $fs={14}>1920 * 1080<Caret $down /></FieldBox>
            </FormRow>
            <CheckRow>
              <FormLabel>自动生成封面</FormLabel>
              <Check>
                <Glyph $s={14} $sw={2.500}><path d="M4 12l5 5 11-11" /></Glyph>
              </Check>
            </CheckRow>
          </Form>
          <Spacer />
          <SideTabs $top>
            <SideTab $active>列表</SideTab>
            <SideTab>鹰眼</SideTab>
            <FoldIcon>
              <ChevronUp size={11} strokeWidth={2.5} />
              <ChevronDown size={11} strokeWidth={2.5} />
            </FoldIcon>
          </SideTabs>
          <Tree>
            <TreeRow $h={24}>
              <TreeMark $c="#7cc47f">
                <Glyph $s={22} $sw={1}>
                  <path d="M10 4L4 12l6 8H7.500L1 12l6.500-8zM14 4l6 8-6 8h2.500L23 12l-6.500-8z" />
                </Glyph>
              </TreeMark>
              报警记录
            </TreeRow>
            <TreeRow $h={40}>
              <TreeMark><Glyph $s={8} viewBox="0 0 8 8" $sw={1}><path d="M1 4h2M5 4h2" /></Glyph></TreeMark>
              文本
            </TreeRow>
          </Tree>
          <SearchBox>搜索节点</SearchBox>
        </Side>
      </Body>

      <NoteArrow width="74" height="16" viewBox="0 0 74 16">
        <path d="M0 8L14 1l-2 5 62 1.500v1L12 11l2 4z" fill="#ff2119" />
      </NoteArrow>
      <NoteText>蓝图交互动画设置</NoteText>
    </Page>
  );
}
